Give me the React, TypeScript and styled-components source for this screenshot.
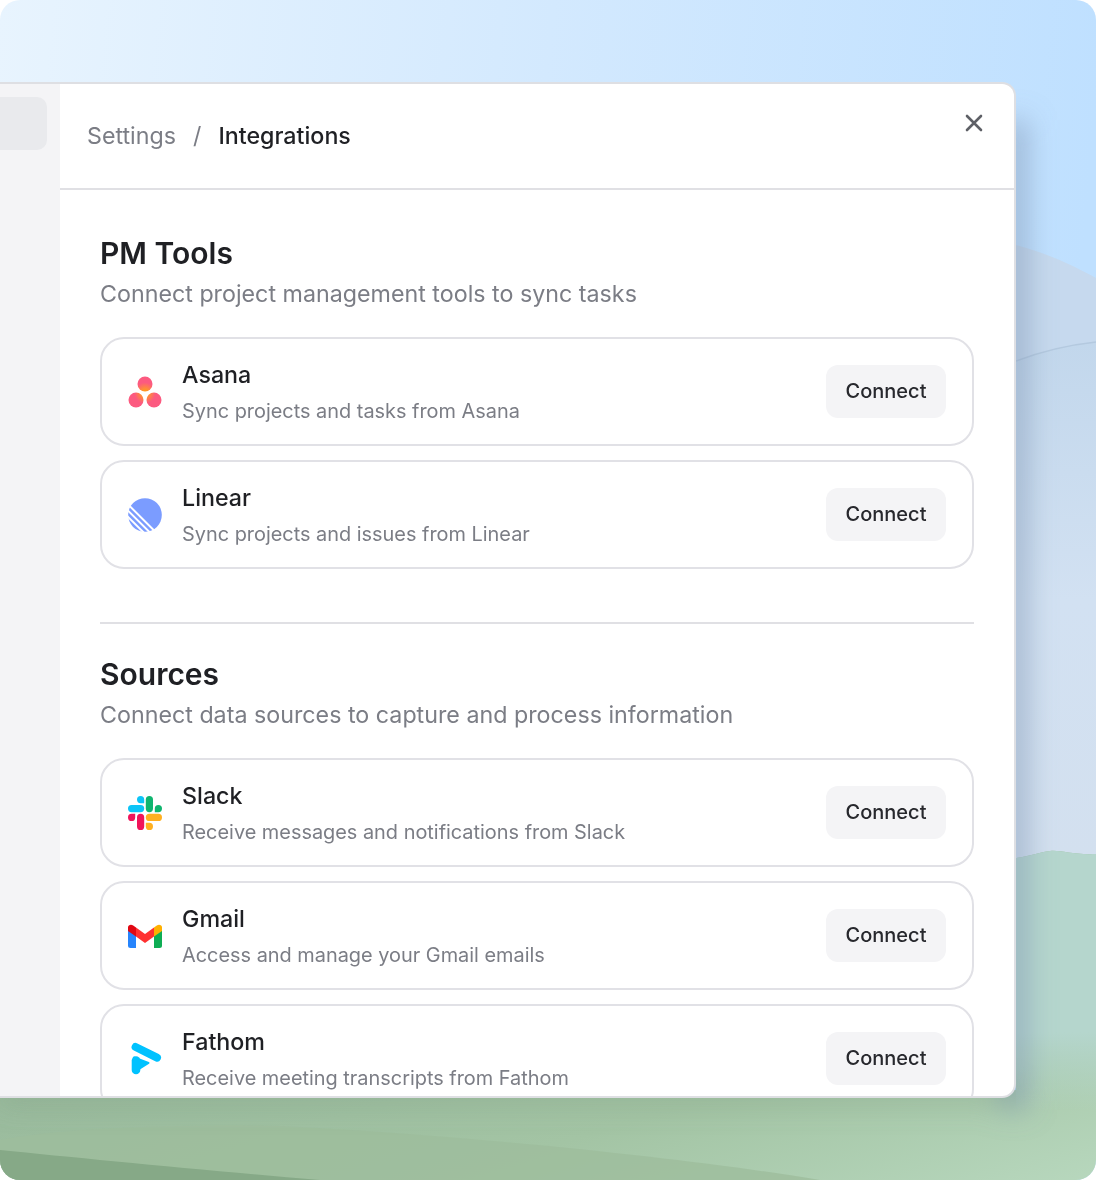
import React from "react";
import styled, { createGlobalStyle } from "styled-components";

const GlobalStyle = createGlobalStyle`
  html, body {
    margin: 0;
    padding: 0;
    background: #fff;
  }
  * {
    box-sizing: border-box;
  }
  body {
    font-family: Inter, "Liberation Sans", sans-serif;
  }
`;

const AsanaIcon = () => (
  <svg width="34" height="34" viewBox="0 0 34 34">
    <defs>
      <radialGradient id="asana" gradientUnits="userSpaceOnUse" cx="17" cy="18" r="10.5">
        <stop offset="0%" stopColor="#ffa800" />
        <stop offset="45%" stopColor="#ff8a3c" />
        <stop offset="100%" stopColor="#fc5a80" />
      </radialGradient>
    </defs>
    <circle cx="17" cy="9" r="7.5" fill="url(#asana)" />
    <circle cx="8" cy="25" r="7.5" fill="url(#asana)" />
    <circle cx="26" cy="25" r="7.5" fill="url(#asana)" />
  </svg>
);

const LinearIcon = () => (
  <svg width="34" height="34" viewBox="0 0 34 34">
    <circle cx="17" cy="17" r="16.8" fill="#7b9cff" />
    <g stroke="#fff" strokeWidth="2">
      <path d="M-2 4.4 L29.6 36" />
      <path d="M-2 10.6 L23.4 36" />
      <path d="M-2 16.8 L17.2 36" />
    </g>
  </svg>
);

const SlackIcon = () => (
  <svg width="34" height="34" viewBox="0 0 34 34">
    <path
      d="M7.2 21.4a3.6 3.6 0 1 1-3.6-3.6h3.6zM9 21.4a3.6 3.6 0 0 1 7.2 0v9a3.6 3.6 0 0 1-7.2 0z"
      fill="#f0145a"
    />
    <path
      d="M12.6 7.2A3.6 3.6 0 1 1 16.2 3.6v3.6zM12.6 9a3.6 3.6 0 0 1 0 7.2h-9a3.6 3.6 0 0 1 0-7.2z"
      fill="#0cc4f7"
    />
    <path
      d="M26.8 12.6a3.6 3.6 0 1 1 3.6 3.6h-3.6zM25 12.6a3.6 3.6 0 0 1-7.2 0v-9a3.6 3.6 0 0 1 7.2 0z"
      fill="#10b56f"
    />
    <path
      d="M21.4 26.8a3.6 3.6 0 1 1-3.6 3.6v-3.6zM21.4 25a3.6 3.6 0 0 1 0-7.2h9a3.6 3.6 0 0 1 0 7.2z"
      fill="#ffb020"
    />
  </svg>
);

const GmailIcon = () => (
  <svg width="34" height="34" viewBox="0 0 34 34">
    <path d="M0 9v17.5A2.5 2.5 0 0 0 2.5 29H8V15.5z" fill="#2684fc" />
    <path d="M26 15.5V29h5.5a2.5 2.5 0 0 0 2.5-2.5V9z" fill="#0ead54" />
    <path d="M8 8.5v9l9 6.6 9-6.6v-9l-9 6.6z" fill="#ff3131" />
    <path d="M0 8.3V12l8 5.5V8.5L5.2 6.4C3 4.8 0 5.9 0 8.3z" fill="#e00712" />
    <path d="M26 8.5v9l8-5.5V8.3c0-2.4-3-3.5-5.2-1.9z" fill="#ffb000" />
  </svg>
);

const FathomIcon = () => (
  <svg width="34" height="34" viewBox="0 0 34 34">
    <g fill="none" stroke="#00c2ff" strokeLinecap="round" strokeLinejoin="round">
      <path d="M7.6 5 L29 15.6" strokeWidth="8" />
      <path d="M8 18.5 L8 28" strokeWidth="8.6" />
    </g>
    <path
      d="M6 15.5 L20.5 21 L11 27 L6 27z"
      fill="#00c2ff"
      stroke="#00c2ff"
      strokeWidth="2"
      strokeLinejoin="round"
    />
  </svg>
);

const pmTools = [
  { name: "Asana", desc: "Sync projects and tasks from Asana", Icon: AsanaIcon },
  { name: "Linear", desc: "Sync projects and issues from Linear", Icon: LinearIcon },
];

const sources = [
  { name: "Slack", desc: "Receive messages and notifications from Slack", Icon: SlackIcon },
  { name: "Gmail", desc: "Access and manage your Gmail emails", Icon: GmailIcon },
  { name: "Fathom", desc: "Receive meeting transcripts from Fathom", Icon: FathomIcon },
];

const Wallpaper = () => (
  <WallpaperSvg viewBox="0 0 1096 1180" preserveAspectRatio="none">
    <defs>
      <linearGradient id="sky" x1="0" y1="0" x2="1" y2="0.1">
        <stop offset="0%" stopColor="#e8f4fe" />
        <stop offset="50%" stopColor="#d3e9fe" />
        <stop offset="100%" stopColor="#bfe0ff" />
      </linearGradient>
      <linearGradient id="hillFront" x1="0" y1="0" x2="0" y2="1">
        <stop offset="0%" stopColor="#c2d7ec" />
        <stop offset="50%" stopColor="#d2e1f2" />
        <stop offset="100%" stopColor="#d3e0ef" />
      </linearGradient>
      <linearGradient id="field" x1="0" y1="0" x2="1" y2="1">
        <stop offset="0%" stopColor="#8fb095" />
        <stop offset="70%" stopColor="#a3c4a4" />
        <stop offset="100%" stopColor="#b7d7bd" />
      </linearGradient>
      <linearGradient id="fieldHaze" x1="0" y1="0" x2="0" y2="1">
        <stop offset="0%" stopColor="#b5d6cd" />
        <stop offset="70%" stopColor="#b5d6cd" />
        <stop offset="100%" stopColor="#b5d6cd" stopOpacity="0" />
      </linearGradient>
      <filter id="soft" x="-50%" y="-50%" width="200%" height="200%">
        <feGaussianBlur stdDeviation="14" />
      </filter>
    </defs>
    <rect width="1096" height="1180" fill="url(#sky)" />
    <path d="M1016 245C1050 254 1078 268 1096 278V400H1016z" fill="#c6d9ee" />
    <path
      d="M1016 361C1040 352 1068 345 1096 342V860H1016z"
      fill="url(#hillFront)"
    />
    <path d="M1016 361C1040 352 1068 345 1096 342" fill="none" stroke="#b4c9df" strokeWidth="1.5" />
    <path d="M0 1090H1016L1016 858C1030 856 1040 852 1050 851C1062 850 1072 855 1096 854V1180H0z" fill="url(#field)" />
    <path d="M1016 858C1030 856 1040 852 1050 851C1062 850 1072 855 1096 854V1110H1016z" fill="url(#fieldHaze)" />
    <path d="M0 1140C60 1128 180 1124 280 1126C480 1136 700 1160 820 1180H0z" fill="#9dbd9c" opacity="0.8" />
    <path d="M0 1150C80 1158 200 1170 320 1180H0z" fill="#86a987" />
    <g filter="url(#soft)">
      <rect x="1000" y="120" width="28" height="990" fill="#7f97b4" opacity="0.55" />
      <rect x="0" y="1084" width="1020" height="20" fill="#6f8f78" opacity="0.3" />
    </g>
  </WallpaperSvg>
);

const IntegrationRow: React.FC<{
  name: string;
  desc: string;
  Icon: React.FC;
}> = ({ name, desc, Icon }) => (
  <Row>
    <IconSlot>
      <Icon />
    </IconSlot>
    <RowText>
      <RowName>{name}</RowName>
      <RowDesc>{desc}</RowDesc>
    </RowText>
    <ConnectButton>Connect</ConnectButton>
  </Row>
);

export default function App() {
  return (
    <Page>
      <GlobalStyle />
      <Wallpaper />
      <Window>
        <Sidebar>
          <SidebarItem />
        </Sidebar>
        <Main>
          <Header>
            <Breadcrumb>
              <Crumb>Settings</Crumb>
              <Crumb>/</Crumb>
              <CurrentCrumb>Integrations</CurrentCrumb>
            </Breadcrumb>
            <CloseButton aria-label="Close">
              <svg width="24" height="24" viewBox="0 0 24 24" fill="none" stroke="#5e6066" strokeWidth="2.6" strokeLinecap="round">
                <path d="M5 5l14 14M19 5L5 19" />
              </svg>
            </CloseButton>
          </Header>
          <Content>
            <Section>
              <SectionTitle>PM Tools</SectionTitle>
              <SectionSub>Connect project management tools to sync tasks</SectionSub>
              <RowList>
                {pmTools.map((item) => (
                  <IntegrationRow key={item.name} {...item} />
                ))}
              </RowList>
            </Section>
            <Divider />
            <Section>
              <SectionTitle>Sources</SectionTitle>
              <SectionSub>Connect data sources to capture and process information</SectionSub>
              <RowList>
                {sources.map((item) => (
                  <IntegrationRow key={item.name} {...item} />
                ))}
              </RowList>
            </Section>
          </Content>
        </Main>
      </Window>
    </Page>
  );
}

const Page = styled.div`
  position: relative;
  width: 1096px;
  height: 1180px;
  border-radius: 20px;
  overflow: hidden;
  padding-top: 82px;
`;

const WallpaperSvg = styled.svg`
  position: absolute;
  inset: 0;
  width: 100%;
  height: 100%;
`;

const Window = styled.div`
  position: relative;
  display: flex;
  width: 1016px;
  height: 1016px;
  background: #fff;
  border: 2px solid #dedfe3;
  border-left: none;
  border-radius: 0 14px 14px 0;
  overflow: hidden;
`;

const Sidebar = styled.div`
  flex: 0 0 60px;
  background: #f4f4f6;
  padding-top: 13px;
`;

const SidebarItem = styled.div`
  width: 47px;
  height: 53px;
  background: #e9eaed;
  border-radius: 0 10px 10px 0;
`;

const Main = styled.div`
  flex: 1;
  min-width: 0;
  display: flex;
  flex-direction: column;
`;

const Header = styled.div`
  flex: 0 0 106px;
  display: flex;
  justify-content: space-between;
  align-items: flex-start;
  padding: 26px 28px 0 27px;
  border-bottom: 2px solid #e0e0e4;
`;

const Breadcrumb = styled.div`
  display: flex;
  gap: 17px;
  align-items: center;
  height: 50px;
  font-size: 23.25px;
`;

const Crumb = styled.span`
  color: #7b7d85;
`;

const CurrentCrumb = styled.span`
  color: #1f2024;
  font-weight: 500;
`;

const CloseButton = styled.div`
  width: 24px;
  height: 24px;
  margin-top: 1px;
`;

const Content = styled.div`
  flex: 1;
  min-height: 0;
  padding: 43px 41px 0 40px;
  width: 955px;
  overflow: hidden;
`;

const Section = styled.section``;

const SectionTitle = styled.h2`
  margin: 0;
  font-size: 30px;
  line-height: 40px;
  font-weight: 600;
  color: #1f2024;
`;

const SectionSub = styled.p`
  margin: 0;
  font-size: 23.25px;
  line-height: 41px;
  color: #7b7d85;
`;

const RowList = styled.div`
  display: flex;
  flex-direction: column;
  gap: 14px;
  margin-top: 23px;
`;

const Row = styled.div`
  flex: 0 0 auto;
  display: flex;
  align-items: center;
  height: 109px;
  padding: 0 26px;
  background: #fff;
  border: 2px solid #e1e1e6;
  border-radius: 24px;
`;

const IconSlot = styled.div`
  flex: 0 0 34px;
  height: 34px;
  display: flex;
  margin-right: 20px;
`;

const RowText = styled.div`
  flex: 1;
  min-width: 0;
`;

const RowName = styled.div`
  font-size: 23.25px;
  line-height: 34px;
  font-weight: 500;
  color: #1f2024;
  margin-bottom: 4px;
`;

const RowDesc = styled.div`
  font-size: 19.9px;
  line-height: 30px;
  color: #7b7d85;
`;

const ConnectButton = styled.button`
  flex: 0 0 120px;
  height: 53px;
  padding: 0 0 2px;
  border: none;
  border-radius: 12px;
  background: #f4f4f6;
  color: #27282d;
  font-family: inherit;
  font-size: 20px;
  font-weight: 500;
`;

const Divider = styled.hr`
  margin: 53px 0 30px;
  border: none;
  border-top: 2px solid #e0e0e4;
`;
